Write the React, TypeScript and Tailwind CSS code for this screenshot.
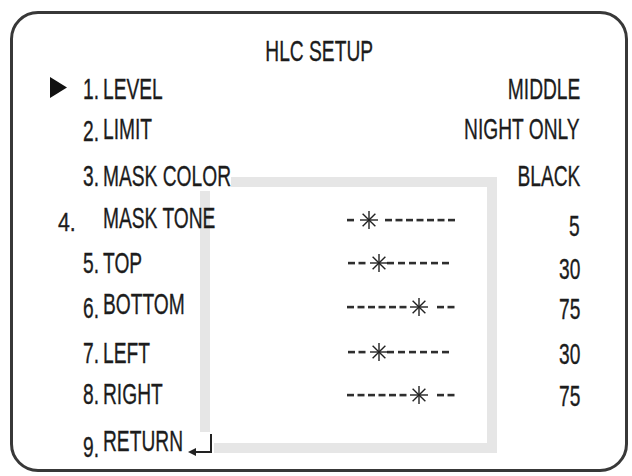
import React from "react";

type Row = {
  num: string;
  label: string;
  value?: string;
  h: string;
  numCls: string;
  valCls?: string;
  slider?: "a" | "b" | "c";
  sy?: number;
  arrow?: boolean;
  ret?: boolean;
  knock?: boolean;
};

const rows: Row[] = [
  { num: "1.", label: "LEVEL", value: "MIDDLE", h: "h-[40px]", numCls: "ml-[16px]", arrow: true },
  { num: "2.", label: "LIMIT", value: "NIGHT ONLY", h: "h-[47px]", numCls: "ml-[70px] mt-[2px]" },
  { num: "3.", label: "MASK COLOR", value: "BLACK", h: "h-[42px]", numCls: "ml-[70px]", knock: true },
  { num: "4.", label: "MASK TONE", value: "5", h: "h-[45px]", numCls: "ml-[45px] mt-[4px] text-[25px]", valCls: "mt-[8px]", slider: "a", sy: 17 },
  { num: "5.", label: "TOP", value: "30", h: "h-[41px]", numCls: "ml-[70px]", valCls: "mt-[6px]", slider: "b", sy: 15 },
  { num: "6.", label: "BOTTOM", value: "75", h: "h-[49px]", numCls: "ml-[70px] mt-[4px]", valCls: "mt-[5px]", slider: "c", sy: 18 },
  { num: "7.", label: "LEFT", value: "30", h: "h-[41px]", numCls: "ml-[70px]", valCls: "mt-[1px]", slider: "b", sy: 14 },
  { num: "8.", label: "RIGHT", value: "75", h: "h-[47px]", numCls: "ml-[70px]", valCls: "mt-[2px]", slider: "c", sy: 16 },
  { num: "9.", label: "RETURN", h: "h-[40px]", numCls: "ml-[70px] mt-[6px]", ret: true },
];

// the OSD font is a tight condensed face; squeeze Arial-width text to match
function T({
  children,
  className = "",
  sx = "scale-x-[0.64]",
}: {
  children: React.ReactNode;
  className?: string;
  sx?: string;
}) {
  return (
    <span className={`inline-block whitespace-nowrap [-webkit-text-stroke:0.35px_#1c1c1c] ${sx} ${className}`}>
      {children}
    </span>
  );
}

// dash x positions + star centre for each slider pattern
const patterns = {
  a: { dashes: [0, 38, 48.5, 59, 69.5, 80, 90.5, 101], star: 22 },
  b: { dashes: [1, 11.5, 40, 51, 62, 73, 84, 95], star: 32 },
  c: { dashes: [0, 10.5, 21, 31.5, 42, 52.5, 90, 100.5], star: 72 },
};

function Slider({ kind, sy }: { kind: "a" | "b" | "c"; sy: number }) {
  const p = patterns[kind];
  const r = 9;
  const d = r * 0.707;
  return (
    <svg width="120" height="32" viewBox="0 0 120 32" className="shrink-0">
      {p.dashes.map((x, i) => (
        <rect key={i} x={x} y={sy - 1.2} width="7" height="2.6" fill="#2e2e2e" />
      ))}
      <g stroke="#222" strokeWidth="1.4">
        <line x1={p.star - r} y1={sy} x2={p.star + r} y2={sy} />
        <line x1={p.star} y1={sy - r} x2={p.star} y2={sy + r} />
        <line x1={p.star - d} y1={sy - d} x2={p.star + d} y2={sy + d} />
        <line x1={p.star - d} y1={sy + d} x2={p.star + d} y2={sy - d} />
      </g>
    </svg>
  );
}

export default function App() {
  return (
    <div className="w-[632px] h-[476px] bg-white pl-[10px] pt-[11px] font-['Liberation_Sans',Arial,sans-serif] text-[#1c1c1c]">
      <div className="relative w-[618px] h-[461px] border-[3px] border-[#383838] rounded-[28px] pt-[22px]">
        {/* mask area square behind the menu */}
        <div className="absolute left-[187px] top-[163px] w-[297px] h-[276px] border-[10px] border-[#e6e6e6]" />

        <div className="relative">
          <div className="h-[38px] text-center text-[30px] leading-[30px]">
            <T className="origin-center">HLC SETUP</T>
          </div>

          {rows.map((row) => (
            <div key={row.num} className={`flex items-start text-[30px] leading-[30px] ${row.h}`}>
              <div className="w-[90px] shrink-0 flex items-start">
                {row.arrow && (
                  <svg width="17" height="21" viewBox="0 0 17 21" className="ml-[37px] mt-[3px] shrink-0">
                    <polygon points="0,0 17,10.5 0,21" fill="#111" />
                  </svg>
                )}
                <T
                  className={`origin-left ${row.numCls}`}
                  sx={row.num === "4." ? "scale-x-[0.85]" : "scale-x-[0.64]"}
                >
                  {row.num}
                </T>
              </div>
              <div className="w-[244px] shrink-0 flex items-start">
                {row.ret ? (
                  <>
                    <div className="w-[85px] shrink-0">
                      <T className="origin-left">{row.label}</T>
                    </div>
                    <svg width="26" height="26" viewBox="0 0 26 26" className="mt-[6px] shrink-0 bg-white">
                      <path d="M23 2 V20 H6" fill="none" stroke="#222" strokeWidth="2" />
                      <polygon points="0,20 8,16 8,24" fill="#222" />
                    </svg>
                  </>
                ) : (
                  <T className={`origin-left ${row.knock ? "bg-white" : ""}`}>{row.label}</T>
                )}
              </div>
              {row.slider && <Slider kind={row.slider} sy={row.sy ?? 16} />}
              {row.value && (
                <div className={`ml-auto pr-[45px] ${row.valCls ?? ""}`}>
                  <T className="origin-right">{row.value}</T>
                </div>
              )}
            </div>
          ))}
        </div>
      </div>
    </div>
  );
}
